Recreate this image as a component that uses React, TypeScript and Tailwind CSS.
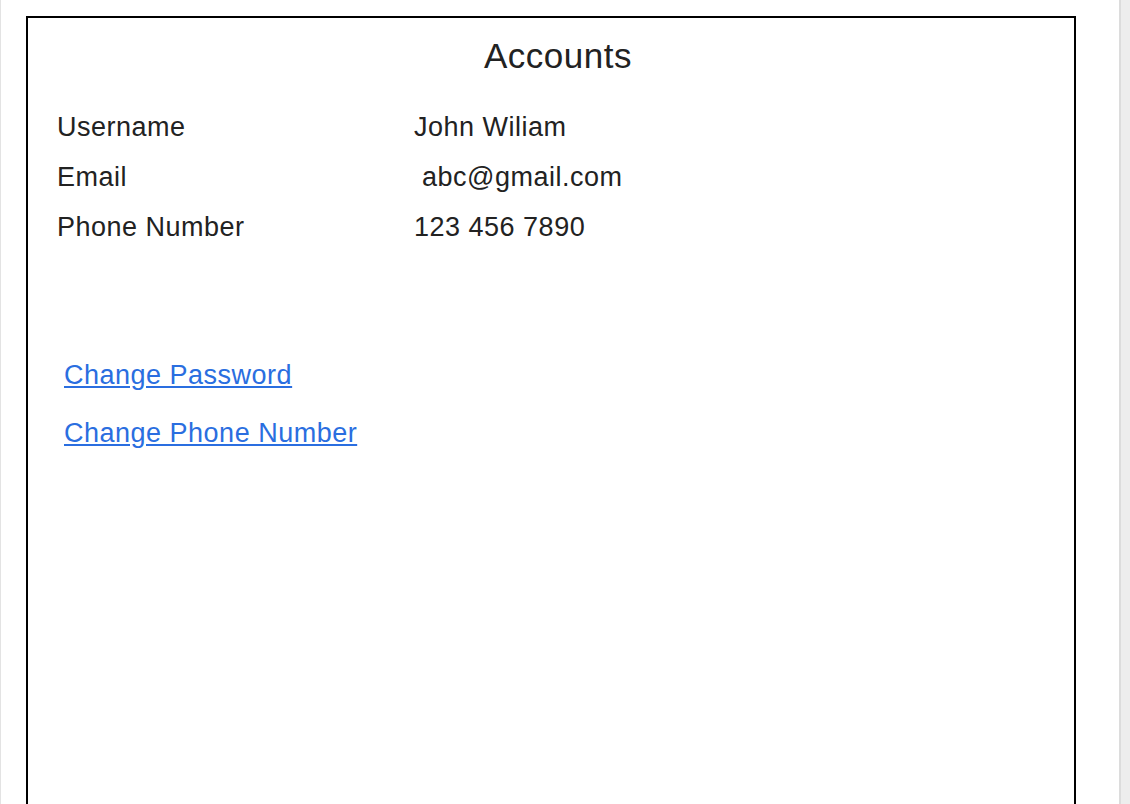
import React from "react";

export default function App() {
  const rows: [string, string][] = [
    ["Username", "John Wiliam"],
    ["Email", "\u00a0abc@gmail.com"],
    ["Phone Number", "123 456 7890"],
  ];
  return (
    <div
      className="flex h-[804px] w-full overflow-hidden bg-white text-[#222222]"
      style={{ fontFamily: '"Liberation Sans", Arial, Helvetica, sans-serif' }}
    >
      <div className="w-px shrink-0 bg-[#e3e3e3]" />
      <div className="flex-1 pl-[25px] pr-[43px] pt-4">
        <div className="h-[820px] w-[1050px] border-2 border-black">
          <h1 className="mt-[18px] pl-[14px] text-center text-[35px] leading-[39px] tracking-[0.5px]">Accounts</h1>
          <div className="mt-[27px] grid grid-cols-[357px_1fr] pl-[29px] text-[27px] leading-[50px] tracking-[0.5px]">
            {rows.map(([k, v]) => (
              <React.Fragment key={k}>
                <div>{k}</div>
                <div>{v}</div>
              </React.Fragment>
            ))}
          </div>
          <div className="mt-[94px] flex flex-col pl-[36px] text-[27px] leading-[58px] tracking-[0.5px]">
            <a href="#" className="w-fit text-[#2a6ee0] underline">Change Password</a>
            <a href="#" className="w-fit text-[#2a6ee0] underline">Change Phone Number</a>
          </div>
        </div>
      </div>
      <div className="w-[11px] shrink-0 border-l-2 border-[#dcdcdc] bg-[#ededed]" />
    </div>
  );
}
